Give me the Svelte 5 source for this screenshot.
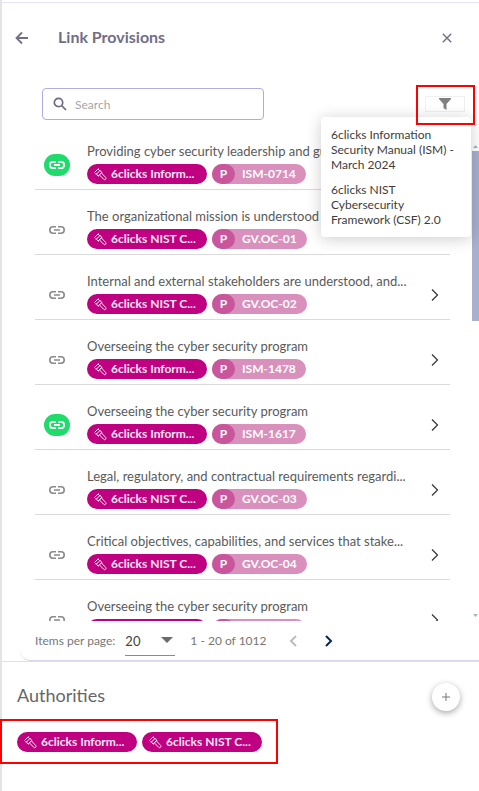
<script lang="ts">
  const authorities = {
    ism: '6clicks Inform...',
    csf: '6clicks NIST C...',
  };

  const provisions = [
    { title: 'Providing cyber security leadership and guidan...', authority: authorities.ism, code: 'ISM-0714', linked: true },
    { title: 'The organizational mission is understood and inf...', authority: authorities.csf, code: 'GV.OC-01', linked: false },
    { title: 'Internal and external stakeholders are understood, and...', authority: authorities.csf, code: 'GV.OC-02', linked: false },
    { title: 'Overseeing the cyber security program', authority: authorities.ism, code: 'ISM-1478', linked: false },
    { title: 'Overseeing the cyber security program', authority: authorities.ism, code: 'ISM-1617', linked: true },
    { title: 'Legal, regulatory, and contractual requirements regardi...', authority: authorities.csf, code: 'GV.OC-03', linked: false },
    { title: 'Critical objectives, capabilities, and services that stake...', authority: authorities.csf, code: 'GV.OC-04', linked: false },
    { title: 'Overseeing the cyber security program', authority: authorities.ism, code: 'ISM-1618', linked: false },
  ];

  const filters = [
    '6clicks Information Security Manual (ISM) - March 2024',
    '6clicks NIST Cybersecurity Framework (CSF) 2.0',
  ];

  let search = $state('');
  let pageSize = $state('20');
  let menuOpen = $state(true);
</script>

{#snippet authorityPill(label: string)}
  <span class="pill">
    <svg class="gavel" viewBox="0 0 14 14" fill="none" stroke="currentColor" aria-hidden="true">
      <path d="M1.500 5.500 5.500 1.500M3 7.500 7.500 3M2.500 6 4 7.500M5 2l2 2M5 9l4-4M3.500 7.500l2 2M7 3.500 9 5.500" />
      <path d="M7 7l1.500-1 4.200 4.500q.8 1.300-.3 2-1 .6-1.800-.3L6.500 8z" />
    </svg>
    {label}
  </span>
{/snippet}

<main class="page">
  <section class="dialog">
    <header class="dialog-header">
      <button class="icon-btn back" aria-label="Back">
        <svg width="14" height="14" viewBox="0 0 14 14"><path d="M13 7H2M7 1.500 1.500 7 7 12.500" /></svg>
      </button>
      <h1>Link Provisions</h1>
      <button class="icon-btn" aria-label="Close">
        <svg width="10" height="10" viewBox="0 0 10 10"><path d="M.8.8l8.400 8.400M9.200.8.8 9.200" /></svg>
      </button>
    </header>

    <div class="toolbar">
      <label class="search">
        <svg width="14" height="14" viewBox="0 0 14 14" aria-hidden="true">
          <circle cx="5.500" cy="5.500" r="4.200" />
          <path d="M8.500 8.500 13 13" />
        </svg>
        <input type="text" placeholder="Search" aria-label="Search" bind:value={search} />
      </label>

      <div class="filter">
        <button class="filter-btn" aria-label="Filter" onclick={() => (menuOpen = !menuOpen)}>
          <svg width="12" height="12" viewBox="0 0 12 12"><path d="M0 0h12v1L7.500 6v6l-3-2V6L0 1z" fill="#808080" /></svg>
        </button>
        {#if menuOpen}
          <ul class="filter-menu">
            {#each filters as filter}
              <li><button>{filter}</button></li>
            {/each}
          </ul>
        {/if}
        <div class="highlight"></div>
      </div>
    </div>

    <div class="scroll-area">
      <ul class="provisions">
        {#each provisions as item}
          <li>
            <button class="link-btn" class:linked={item.linked} aria-label="Link provision">
              <svg width="16" height="8" viewBox="0 0 16 8">
                <path d="M7 .8H4a3.200 3.200 0 0 0 0 6.400h3M9 .8h3a3.200 3.200 0 0 1 0 6.400H9M5 4h6" />
              </svg>
            </button>
            <div class="details">
              <span class="title">{item.title}</span>
              <div class="pills">
                {@render authorityPill(item.authority)}
                <span class="pill code"><span class="type">P</span>{item.code}</span>
              </div>
            </div>
            <button class="open-btn" aria-label="Open provision">
              <svg width="8" height="14" viewBox="0 0 8 14"><path d="M1 1.500 6.500 7 1 12.500" /></svg>
            </button>
          </li>
        {/each}
      </ul>
      <div class="scrollbar" aria-hidden="true">
        <svg width="5" height="3" viewBox="0 0 5 3"><path d="M0 3 2.500 0 5 3z" /></svg>
        <div class="track"><div class="thumb"></div></div>
        <svg width="5" height="3" viewBox="0 0 5 3"><path d="M0 0h5L2.500 3z" /></svg>
      </div>
    </div>

    <footer class="paginator">
      <label for="page-size">Items per page:</label>
      <div class="select">
        <select id="page-size" bind:value={pageSize}>
          <option>10</option>
          <option>20</option>
          <option>50</option>
        </select>
        <svg width="12" height="6" viewBox="0 0 12 6" aria-hidden="true"><path d="M0 0h12L6 6z" fill="#6b6b6b" /></svg>
      </div>
      <span class="range">1 - 20 of 1012</span>
      <button class="page-btn" aria-label="Previous page" disabled>
        <svg width="8" height="12" viewBox="0 0 8 12"><path d="M7 1 2 6l5 5" /></svg>
      </button>
      <button class="page-btn" aria-label="Next page">
        <svg width="8" height="12" viewBox="0 0 8 12"><path d="M1 1l5 5-5 5" /></svg>
      </button>
    </footer>
  </section>

  <section class="authorities">
    <div class="authorities-header">
      <h2>Authorities</h2>
      <button class="add-btn" aria-label="Add authority">
        <svg width="8" height="8" viewBox="0 0 8 8"><path d="M4 0v8M0 4h8" /></svg>
      </button>
    </div>
    <div class="pills boxed">
      {@render authorityPill(authorities.ism)}
      {@render authorityPill(authorities.csf)}
    </div>
  </section>
</main>

<style>
  :global(body) {
    background: #fff;
    font-family: Lato, 'Liberation Sans', sans-serif;
    font-size: 13px;
    color: #5a5a5a;
  }

  * {
    box-sizing: border-box;
  }

  button,
  input,
  select {
    font: inherit;
    color: inherit;
    background: none;
    border: none;
    margin: 0;
    padding: 0;
  }

  button {
    cursor: pointer;
  }

  ul {
    list-style: none;
    margin: 0;
    padding: 0;
  }

  h1,
  h2 {
    margin: 0;
  }

  svg {
    display: block;
    flex-shrink: 0;
  }

  .page {
    display: flex;
    flex-direction: column;
    height: 100vh;
    padding-top: 2px;
    background: linear-gradient(90deg, #e4e4e4 2px, #fff 2px);
  }

  .dialog {
    flex: 1;
    min-height: 0;
    display: flex;
    flex-direction: column;
    margin-left: 2px;
    border-top: 1px solid #e6e3f6;
  }

  .dialog-header {
    display: flex;
    align-items: center;
    height: 70px;
    padding: 0 22px 0 13px;
    color: #716e8a;
  }

  .dialog-header h1 {
    flex: 1;
    margin-left: 29px;
    padding-bottom: 3px;
    font-size: 16px;
    line-height: 20px;
    font-weight: 700;
  }

  .icon-btn {
    display: grid;
    place-items: center;
    width: 20px;
    height: 20px;
    border-radius: 50%;
  }

  .icon-btn svg {
    fill: none;
    stroke: currentColor;
    stroke-width: 1.4;
  }

  .back {
    width: 14px;
  }

  .back svg {
    stroke-width: 1.8;
  }

  .toolbar {
    display: flex;
    align-items: center;
    justify-content: space-between;
    padding: 15px 14px 21px 40px;
  }

  .search {
    display: flex;
    align-items: center;
    gap: 8px;
    width: 222px;
    height: 32px;
    padding: 0 10px;
    border: 1px solid #b5a8e6;
    border-radius: 4px;
  }

  .search svg {
    fill: none;
    stroke: #6d6a86;
    stroke-width: 1.7;
  }

  .search input {
    flex: 1;
    min-width: 0;
    font-size: 12px;
    outline: none;
  }

  .search input::placeholder {
    color: #a6a6a6;
    opacity: 1;
  }

  .filter {
    position: relative;
  }

  .filter-btn {
    display: grid;
    place-items: center;
    width: 40px;
    height: 16px;
    border: 1px solid #f0f0f0;
  }

  .filter-menu {
    position: absolute;
    top: 21px;
    right: -6px;
    z-index: 2;
    width: 150px;
    padding: 5px 0;
    background: #fff;
    border-radius: 4px;
    box-shadow: 0 2px 16px rgba(0, 0, 0, 0.2);
  }

  .filter-menu button {
    width: 100%;
    padding: 5px 10px;
    font-size: 12px;
    line-height: 15px;
    text-align: left;
    color: #3d3d3d;
  }

  .highlight {
    position: absolute;
    inset: -11px -10px -13px -9px;
    z-index: 3;
    border: 2px solid #f00;
    pointer-events: none;
  }

  .scroll-area {
    flex: 1;
    min-height: 0;
    display: flex;
    justify-content: space-between;
  }

  .provisions {
    flex: 1;
    display: flex;
    flex-direction: column;
    gap: 16px;
    margin: 0 22px 0 33px;
    overflow: hidden;
  }

  .provisions li {
    flex-shrink: 0;
    display: flex;
    align-items: center;
    height: 49px;
    padding-right: 11px;
    border-bottom: 1px solid #dadada;
  }

  .link-btn {
    display: grid;
    place-items: center;
    width: 26px;
    height: 22px;
    margin-left: 9px;
    border-radius: 11px;
  }

  .link-btn svg {
    fill: none;
    stroke: #8a8a8a;
    stroke-width: 1.6;
  }

  .link-btn.linked {
    background: #1edb6b;
  }

  .link-btn.linked svg {
    stroke: #fff;
    stroke-width: 2;
  }

  .details {
    flex: 1;
    min-width: 0;
    margin-left: 17px;
    padding-bottom: 4px;
  }

  .title {
    display: block;
    height: 21px;
    line-height: 16px;
    white-space: nowrap;
    overflow: hidden;
  }

  .open-btn svg {
    fill: none;
    stroke: #333;
    stroke-width: 1.2;
  }

  .pills {
    display: flex;
    gap: 5px;
  }

  .pill {
    display: flex;
    align-items: center;
    gap: 4px;
    width: 120px;
    height: 20px;
    padding-left: 6px;
    border-radius: 10px;
    background: #bf0080;
    color: #fbe6f3;
    font-size: 12px;
    line-height: 20px;
    font-weight: 700;
    white-space: nowrap;
  }

  .gavel {
    width: 14px;
    height: 14px;
  }

  .pill.code {
    width: auto;
    gap: 7px;
    padding: 0 10px 0 0;
    background: #d990bd;
    color: #fff;
  }

  .type {
    width: 23px;
    height: 20px;
    border-radius: 10px;
    background: #c9559c;
    text-align: center;
  }

  .scrollbar {
    display: flex;
    flex-direction: column;
    align-items: center;
    width: 7px;
    padding: 4px 0;
  }

  .scrollbar svg {
    fill: #a7b0cc;
  }

  .track {
    flex: 1;
    align-self: stretch;
    padding: 3px 0;
  }

  .thumb {
    height: 37%;
    background: #a7b0cc;
  }

  .paginator {
    display: flex;
    align-items: center;
    height: 40px;
    margin-left: 18px;
    padding-left: 15px;
    border-bottom: 1px solid #d8d5ee;
    border-bottom-left-radius: 10px;
    font-size: 12px;
    color: #777;
  }

  .select {
    display: flex;
    align-items: center;
    width: 50px;
    height: 30px;
    margin: 0 15px 0 10px;
    border-bottom: 1px solid #8a8a8a;
  }

  .select select {
    appearance: none;
    width: 50px;
    height: 29px;
    padding-top: 2px;
    font-size: 13px;
    color: #444;
  }

  .select svg {
    margin-left: -14px;
    margin-right: 2px;
    pointer-events: none;
  }

  .range {
    margin-right: 9px;
  }

  .page-btn {
    display: grid;
    place-items: center;
    width: 36px;
    height: 36px;
  }

  .page-btn svg {
    fill: none;
    stroke: #0b2554;
    stroke-width: 2;
  }

  .page-btn:disabled svg {
    stroke: #bdbdbd;
  }

  .authorities {
    margin-left: 2px;
    padding-bottom: 27px;
    border-top: 1px solid #e0dfe8;
  }

  .authorities-header {
    display: flex;
    align-items: center;
    justify-content: space-between;
    padding: 21px 19px 8px 15px;
  }

  .authorities h2 {
    padding-bottom: 4px;
    font-size: 18px;
    line-height: 24px;
    font-weight: 400;
    color: #666;
  }

  .add-btn {
    display: grid;
    place-items: center;
    width: 28px;
    height: 28px;
    border-radius: 50%;
    background: #fff;
    box-shadow: 0 2px 6px rgba(0, 0, 0, 0.35);
  }

  .add-btn svg {
    stroke: #777;
  }

  .boxed {
    width: 278px;
    margin-left: -2px;
    padding: 11px 0 10px 15px;
    border: 2px solid #f00;
  }
</style>
